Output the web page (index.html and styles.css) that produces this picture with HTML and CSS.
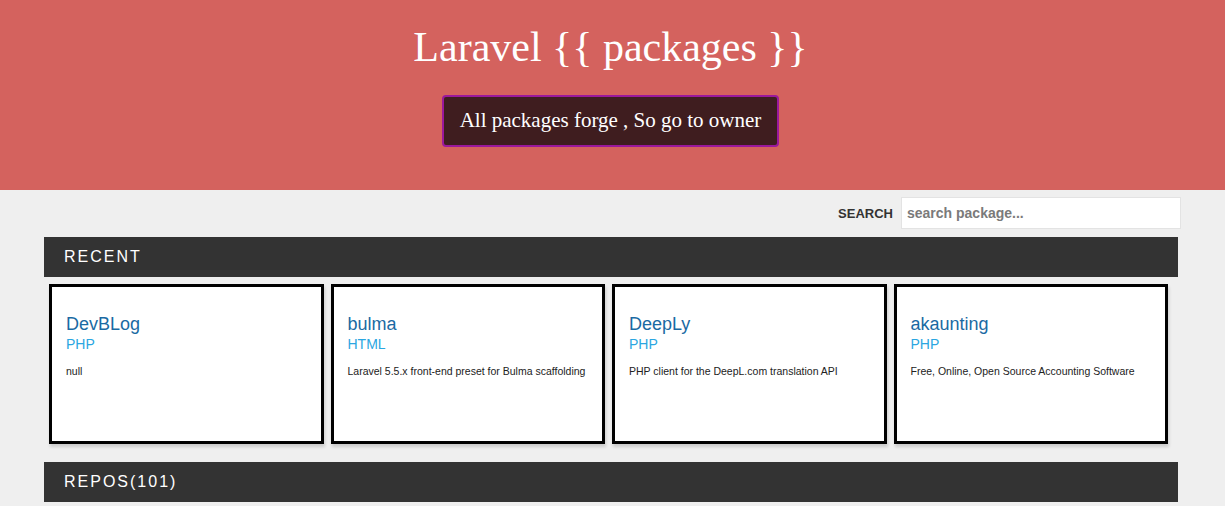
FILE: index.html
```html
<!DOCTYPE html>
<html>
<head>
<meta charset="utf-8">
<title>Laravel packages</title>
<link rel="stylesheet" href="styles.css">
</head>
<body>
<header class="hero">
  <h1 class="hero-title">Laravel {{ packages }}</h1>
  <a class="hero-btn" href="#">All packages forge , So go to owner</a>
</header>
<main class="main">
  <div class="search-row">
    <label class="search-label" for="q">SEARCH</label>
    <input class="search-input" id="q" type="text" placeholder="search package...">
  </div>
  <div class="bar">RECENT</div>
  <div class="cards">
    <div class="card">
      <a class="card-title" href="#">DevBLog</a>
      <div class="card-lang">PHP</div>
      <p class="card-desc">null</p>
    </div>
    <div class="card">
      <a class="card-title" href="#">bulma</a>
      <div class="card-lang">HTML</div>
      <p class="card-desc">Laravel 5.5.x front-end preset for Bulma scaffolding</p>
    </div>
    <div class="card">
      <a class="card-title" href="#">DeepLy</a>
      <div class="card-lang">PHP</div>
      <p class="card-desc">PHP client for the DeepL.com translation API</p>
    </div>
    <div class="card">
      <a class="card-title" href="#">akaunting</a>
      <div class="card-lang">PHP</div>
      <p class="card-desc">Free, Online, Open Source Accounting Software</p>
    </div>
  </div>
  <div class="bar bar-repos">REPOS(101)</div>
</main>
</body>
</html>
```
FILE: styles.css
```css
html, body {
  margin: 0;
  padding: 0;
}
body {
  background: #efefef;
  font-family: "Liberation Sans", Arial, sans-serif;
  color: #222;
}
.hero {
  background: #d4625e;
  height: 190px;
  box-sizing: border-box;
  padding: 23px 4px 0 0;
  display: flex;
  flex-direction: column;
  align-items: center;
}
.hero-title {
  margin: 0;
  font-family: "Liberation Serif", "Times New Roman", serif;
  font-weight: normal;
  font-size: 42px;
  line-height: 48px;
  color: #fff;
}
.hero-btn {
  margin-top: 24px;
  display: block;
  background: #3f1d1f;
  border: 2px solid #9b189c;
  border-radius: 4px;
  padding: 12px 16px 13px;
  font-family: "Liberation Serif", "Times New Roman", serif;
  font-size: 21px;
  line-height: 23px;
  color: #fff;
  text-decoration: none;
}
.main {
  padding: 0 47px 0 44px;
}
.search-row {
  display: flex;
  justify-content: flex-end;
  align-items: center;
  gap: 8px;
  margin-top: 7px;
  margin-right: -3px;
}
.search-label {
  font-size: 13px;
  font-weight: bold;
  color: #333;
}
.search-input {
  width: 280px;
  height: 32px;
  box-sizing: border-box;
  border: 1px solid #e3e3e3;
  background: #fff;
  padding: 0 5px;
  font-family: "Liberation Sans", Arial, sans-serif;
  font-size: 14px;
  font-weight: bold;
  color: #555;
  outline: none;
}
.search-input::placeholder {
  color: #7a7a7a;
}
.bar {
  margin-top: 8px;
  height: 40px;
  background: #333;
  color: #fff;
  font-size: 16px;
  letter-spacing: 2px;
  line-height: 40px;
  padding-left: 20px;
}
.bar-repos {
  margin-top: 18px;
}
.cards {
  display: flex;
  gap: 7px;
  padding: 7px 10px 0 5px;
}
.card {
  flex: 1;
  height: 160px;
  box-sizing: border-box;
  background: #fff;
  border: 3px solid #000;
  box-shadow: 1px 3px 3px rgba(0,0,0,0.15);
  padding: 27px 14px 0;
}
.card-title {
  display: block;
  font-size: 18px;
  line-height: 21px;
  color: #1a6aa3;
  text-decoration: none;
}
.card-lang {
  font-size: 14px;
  line-height: 18px;
  color: #2ba6e1;
}
.card-desc {
  margin: 11px 0 0;
  font-size: 10.5px;
  line-height: 14px;
  color: #222;
  white-space: nowrap;
}
```
